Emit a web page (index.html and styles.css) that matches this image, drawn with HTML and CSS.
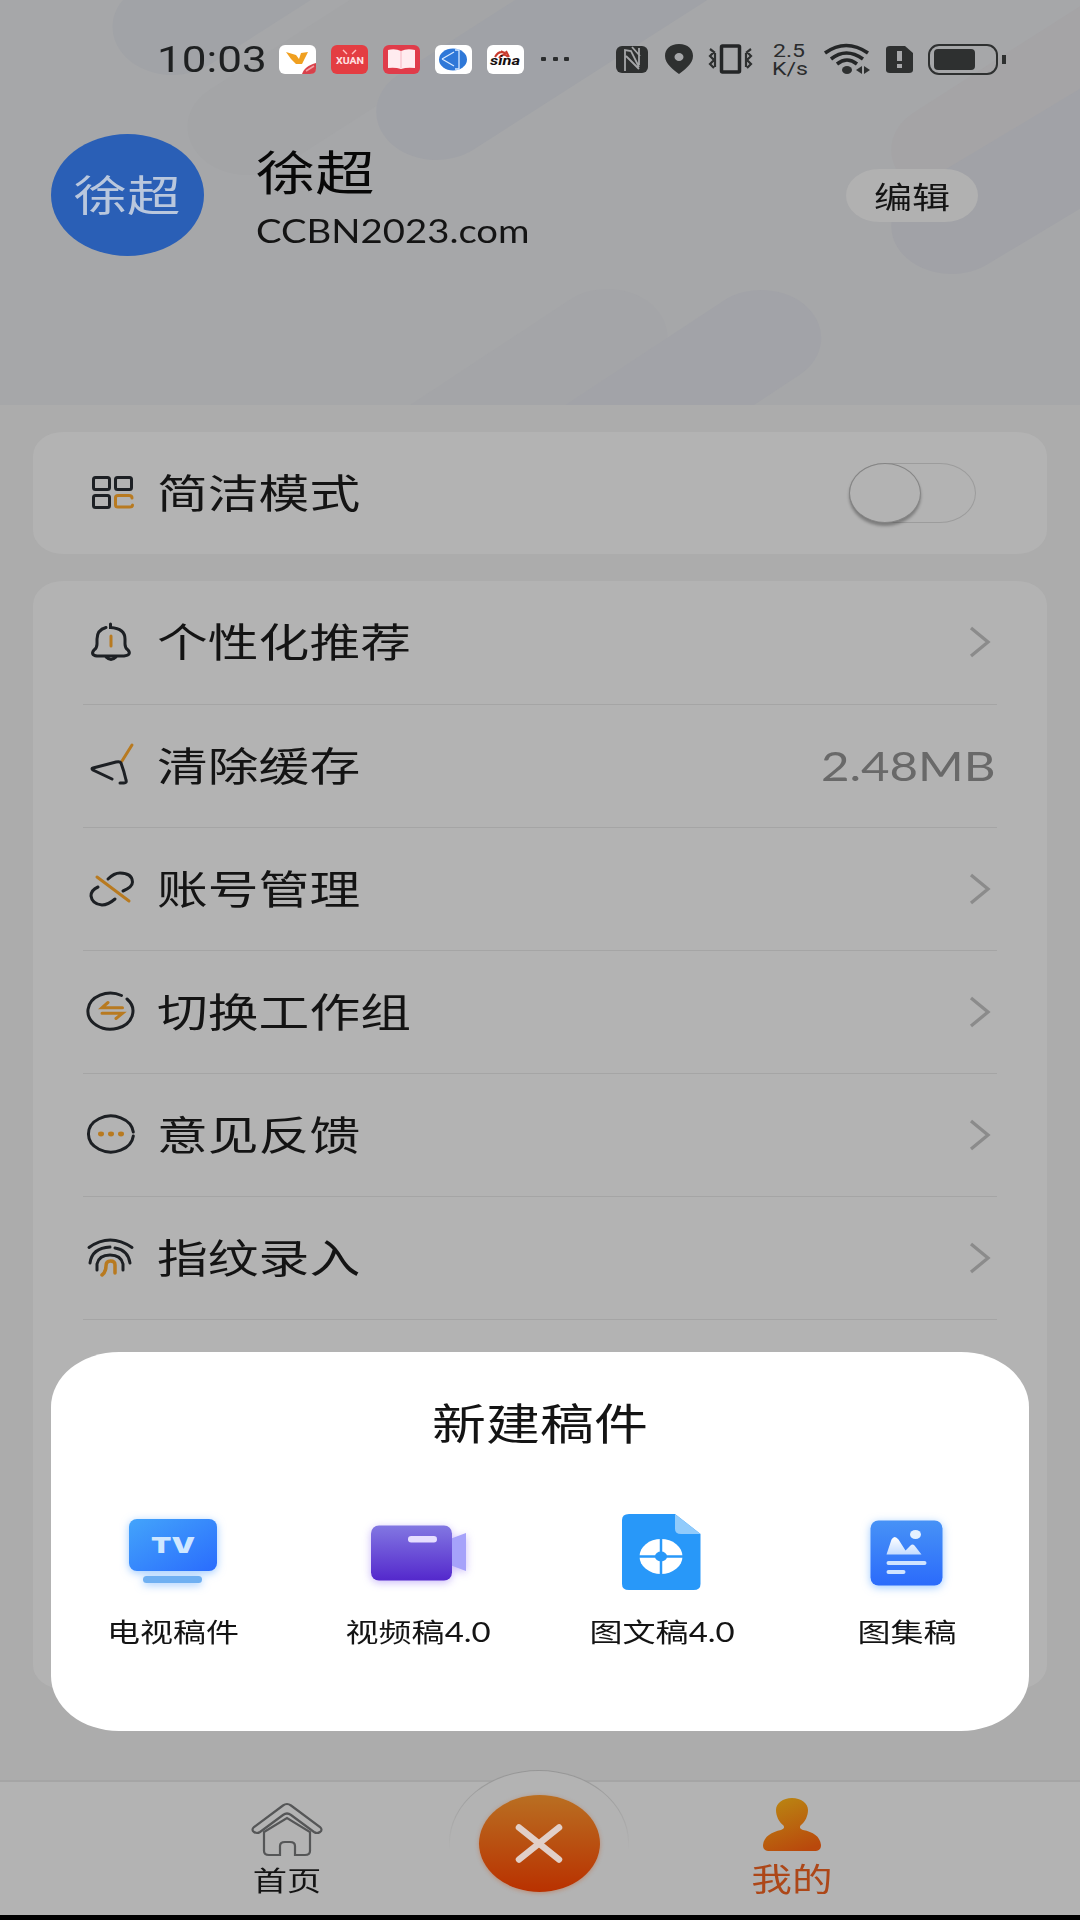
FILE: index.html
```html
<!DOCTYPE html>
<html lang="zh-CN">
<head>
<meta charset="utf-8">
<title>我的</title>
<link rel="stylesheet" href="styles.css">
</head>
<body>
<div class="screen">
  <header class="header">
    <svg class="streaks" viewBox="0 0 864 405" preserveAspectRatio="none">
      <g fill="none" stroke-width="96" stroke-linecap="round">
        <path stroke="#a1a3a7" d="M138 27L438 -213"/>
        <path stroke="#a4a5a7" d="M198 127L498 -113"/>
        <path stroke="#a0a2a7" d="M349 112L649 -128"/>
        <path stroke="#a5a4a6" d="M761 150L961 -10"/>
        <path stroke="#a1a2a7" d="M761 226L961 76"/>
        <path stroke="#a4a5a8" d="M486 337L286 502"/>
        <path stroke="#a2a3a8" d="M609 338L409 503"/>
      </g>
    </svg>
    <div class="status">
      <div class="clock"><span class="wide">10:03</span></div>
      <div class="apps">
        <svg width="37" height="29" viewBox="0 0 37 29"><rect width="37" height="29" rx="6" fill="#fff"/><path d="M7 7l10 3 3 4 2-6 7-1-3 6-3 6h-6l-5-5z" fill="#f0a020"/><path d="M23 29c2-6 7-9 14-11v6q0 5-6 5z" fill="#d8414b"/><path d="M27 26l8-5" stroke="#f3a0a4" stroke-width="1.5"/></svg>
        <svg width="37" height="29" viewBox="0 0 37 29"><rect width="37" height="29" rx="6" fill="#e43d42"/><path d="M12 5l4 4M25 5l-4 4" stroke="#ffc0c0" stroke-width="1.4"/><text x="5" y="19" class="app-word" textLength="28" lengthAdjust="spacingAndGlyphs">XUAN</text></svg>
        <svg width="37" height="29" viewBox="0 0 37 29"><rect width="37" height="29" rx="6" fill="#e03c4a"/><path d="M5 5q7-2 13 1 6-3 14-1v18q-8-1-14 1-6-2-13-1z" fill="#ffecef"/><path d="M18 6v17" stroke="#f5b6c2"/></svg>
        <svg width="37" height="29" viewBox="0 0 37 29"><rect width="37" height="29" rx="6" fill="#fff"/><ellipse cx="18" cy="14.500" rx="14" ry="11" fill="#2f78d8"/><path d="M7 14l12-7M7 14l12 7M20 5h4v19h-4" stroke="#d8eaff" stroke-width="1.300" fill="none"/></svg>
        <svg width="37" height="29" viewBox="0 0 37 29"><rect width="37" height="29" rx="6" fill="#fff"/><path d="M8 12q4-7 10-4M12 13q5-6 9-1M14 6l5 3M19 6l3 6" stroke="#c9392c" stroke-width="2" fill="none"/><text x="3" y="20" class="sina" textLength="30" lengthAdjust="spacingAndGlyphs">sina</text></svg>
      </div>
      <div class="dots"><i></i><i></i><i></i></div>
      <svg class="signals" width="240" height="36" viewBox="0 0 240 36" fill="#2e3030">
        <rect x="1" y="5" width="32" height="27" rx="6"/>
        <path d="M10 30V9l6 1 8 16M11 15l13 13M17 6l8 9M24 7v17" stroke="#a6a7a9" stroke-width="1.800" fill="none"/>
        <path fill-rule="evenodd" d="M64 3c9 0 14 5 14 12 0 8-9 14-14 18-5-4-14-10-14-18C50 8 55 3 64 3zm0 9a4.500 4 0 1 0 0 8 4.500 4 0 1 0 0-8z"/>
        <rect x="106.500" y="5" width="18" height="26" rx="1" fill="none" stroke="#242627" stroke-width="3.500"/>
        <path d="M95 8l4 3-4 4 4 4-4 4 4 4M136 8l-4 3 4 4-4 4 4 4-4 4M100 12v14M131 12v14" fill="none" stroke="#2e3030" stroke-width="2.200"/>
        <text x="158" y="15.500" class="rate" textLength="32" lengthAdjust="spacingAndGlyphs">2.5</text>
        <text x="157" y="33.500" class="rate" textLength="36" lengthAdjust="spacingAndGlyphs">K/s</text>
        <path d="M210 12q21-15 43 0M216 18q15-12 32 0M222 23q10-8 20 0" fill="none" stroke="#242627" stroke-width="3.600"/>
      </svg>
      <svg class="signals-end" width="185" height="36" viewBox="0 0 185 36" fill="#2e3030">
        <ellipse cx="12" cy="29" rx="5" ry="4"/><path d="M27 25v8l-6-4zM29 25v8l6-4z"/>
        <path fill-rule="evenodd" d="M55 5h15l8 7v17q0 3-4 3H55q-4 0-4-3V8q0-3 4-3zm7 5v10h5V10zm0 13v4h5v-4z"/>
        <rect x="94" y="4" width="68" height="29" rx="10" fill="none" stroke="#2e3030" stroke-width="2"/>
        <rect x="99" y="8" width="41" height="21" rx="4"/><rect x="167" y="14" width="4" height="9"/>
      </svg>
    </div>
    <div class="profile">
      <div class="avatar"><span class="wide">徐超</span></div>
      <div class="who">
        <div class="name"><span class="wide">徐超</span></div>
        <div class="org"><span class="wide">CCBN2023.com</span></div>
      </div>
      <div class="edit"><span class="wide">编辑</span></div>
    </div>
  </header>

  <main class="body">
    <section class="card simple">
      <div class="row">
        <svg class="ico" viewBox="0 0 52 40"><rect x="8.500" y="4.500" width="16" height="12" rx="2"/><rect x="30.500" y="4.500" width="16" height="12" rx="2"/><rect x="8.500" y="22.500" width="16" height="12" rx="2"/><path class="o" d="M47 25q0-2.500-3-2.500H33q-2.500 0-2.500 2v7.500q0 2 2.500 2h11.500q3 0 3-2"/></svg>
        <div class="label"><span class="wide">简洁模式</span></div>
        <div class="toggle"><div class="knob"></div></div>
      </div>
    </section>
    <section class="card list">
      <div class="row">
        <svg class="ico" viewBox="0 0 52 40"><path d="M21 5.500Q12 8 12 17v5q0 4-3 6-4 5 3 6h27q8-1 4-6-3-2-3-6v-5C40 9 34 6 25.500 5.500V2M21 35q5 5 10 0"/><path class="o" d="M26 14v10"/></svg>
        <div class="label"><span class="wide">个性化推荐</span></div>
        <svg class="chev" viewBox="0 0 22 32"><path d="M2 2l17 14L2 30"/></svg>
      </div>
      <div class="row">
        <svg class="ico" viewBox="0 0 52 40"><path class="o" d="M47-1L37 15"/><path d="M27 33L8 24q-2-1.500 0-2l23-6q4-1 5 1 3 8 5 17 1 3-2 3h-4"/></svg>
        <div class="label"><span class="wide">清除缓存</span></div>
        <div class="size"><span class="wide">2.48MB</span></div>
      </div>
      <div class="row">
        <svg class="ico" viewBox="0 0 52 40"><path d="M23 10q6-6 12-6 12 0 12.500 9 0 5-9.500 9M13 18q-7 3-7 9 1 8 11 9 6 0 13-6"/><path class="o" d="M12 8l32 24"/></svg>
        <div class="label"><span class="wide">账号管理</span></div>
        <svg class="chev" viewBox="0 0 22 32"><path d="M2 2l17 14L2 30"/></svg>
      </div>
      <div class="row">
        <svg class="ico" viewBox="0 0 52 40"><path d="M36.500 3.500A22.500 18 0 1 0 42 7"/><path class="o" d="M23 10.500l-6 5.200h20.500M17 21.300h20.500L31 26.500"/></svg>
        <div class="label"><span class="wide">切换工作组</span></div>
        <svg class="chev" viewBox="0 0 22 32"><path d="M2 2l17 14L2 30"/></svg>
      </div>
      <div class="row">
        <svg class="ico" viewBox="0 0 52 40"><path d="M48.300 17A22.500 18 0 1 0 48.300 21"/><g fill="#b87a20" stroke="none"><ellipse cx="16" cy="19" rx="3" ry="2.400"/><ellipse cx="26" cy="19" rx="3" ry="2.400"/><ellipse cx="36" cy="19" rx="3" ry="2.400"/></g></svg>
        <div class="label"><span class="wide">意见反馈</span></div>
        <svg class="chev" viewBox="0 0 22 32"><path d="M2 2l17 14L2 30"/></svg>
      </div>
      <div class="row">
        <svg class="ico" viewBox="0 0 52 40"><path d="M4 9.500q21-15 43 0M5 25Q7 10 25 9M30 10q13 2 15 15M12 32v-6q2-9 13-9t13 9v6"/><path class="o thick" d="M30 35v-8q0-4-4.500-4T21 28q0 6-4 9"/></svg>
        <div class="label"><span class="wide">指纹录入</span></div>
        <svg class="chev" viewBox="0 0 22 32"><path d="M2 2l17 14L2 30"/></svg>
      </div>
    </section>
  </main>

  <nav class="tabs">
    <div class="tab home">
      <svg width="74" height="56" viewBox="0 0 74 56" fill="none" stroke="#555657" stroke-width="2.200"><path d="M37 2q2 0 4 1.500L70 25q3 3 0 5-3 2-6 0L41 13q-4-3-8 0L10 30q-3 2-6 0-3-2 0-5L33 3.500Q35 2 37 2z"/><path d="M14 30L37 16l23 14v19q0 4-5 4H45V44q0-4-5-4h-5q-5 0-5 4v9H19q-5 0-5-4z"/></svg>
      <span class="wide">首页</span>
    </div>
    <div class="tab center">
      <div class="halo">
        <div class="close"><svg width="50" height="42" viewBox="0 0 50 42"><path d="M5 4.500l40 32M45 4.500L5 36.500" stroke="#e1cfc8" stroke-width="6.500" stroke-linecap="round"/></svg></div>
      </div>
    </div>
    <div class="tab mine">
      <svg width="58" height="56" viewBox="0 0 58 56"><defs><linearGradient id="person" x1=".3" y1="0" x2=".7" y2="1"><stop offset="0" stop-color="#ba8412"/><stop offset="1" stop-color="#b9480c"/></linearGradient></defs><path fill="url(#person)" d="M29 1c9 0 16 5 16 12 0 6-3 12-7 15-2 2-1 4 2 5 10 2 17 6 18 15 0 4-2 6-7 6H7c-5 0-7-2-7-6 1-9 9-13 18-15 3-1 4-3 2-5-4-3-7-9-7-15C13 6 20 1 29 1z"/></svg>
      <span class="wide">我的</span>
    </div>
  </nav>
  <div class="gesture"></div>

  <section class="sheet">
    <h2 class="title"><span class="wide">新建稿件</span></h2>
    <div class="kinds">
      <div class="kind">
        <svg viewBox="0 0 110 90"><defs><linearGradient id="tv" x1="0" y1="0" x2="1" y2="1"><stop offset="0" stop-color="#43a4fb"/><stop offset="1" stop-color="#2a6cfd"/></linearGradient></defs><g class="glow-blue"><rect x="11" y="13" width="88" height="52" rx="8" fill="url(#tv)"/><rect x="25" y="70" width="59" height="7" rx="3.500" fill="#6fb0f2"/></g><text x="33" y="47" class="tv" textLength="44" lengthAdjust="spacingAndGlyphs">TV</text></svg>
        <span class="wide">电视稿件</span>
      </div>
      <div class="kind">
        <svg viewBox="0 0 110 90"><defs><linearGradient id="cam" x1="0" y1="0" x2="0" y2="1"><stop offset="0" stop-color="#8277e2"/><stop offset="1" stop-color="#5428cc"/></linearGradient></defs><g class="glow-violet"><path d="M87 33l16-6v38l-16-6z" fill="#a6a2fa"/><rect x="8" y="19.500" width="81" height="55" rx="8" fill="url(#cam)"/></g><rect x="45" y="30" width="29" height="6.500" rx="3.200" fill="#e6deff"/></svg>
        <span class="wide">视频稿4.0</span>
      </div>
      <div class="kind">
        <svg viewBox="0 0 110 90"><path fill="#2898f9" d="M22 8h46L93.500 28v50q0 6-7 6H22q-7 0-7-6V14q0-6 7-6z"/><path fill="#91cbfb" d="M68 8L93.500 28H74q-6 0-6-5z"/><ellipse cx="54" cy="50.500" rx="21.500" ry="17.500" fill="#fff"/><path d="M54 32v37M32 50.500h44" stroke="#2898f9" stroke-width="2.500"/><ellipse cx="54" cy="50.500" rx="6" ry="5" fill="#2898f9"/></svg>
        <span class="wide">图文稿4.0</span>
      </div>
      <div class="kind">
        <svg viewBox="0 0 110 90"><defs><linearGradient id="pic" x1="0" y1="0" x2="0" y2="1"><stop offset="0" stop-color="#4792f6"/><stop offset="1" stop-color="#2b6bfb"/></linearGradient><linearGradient id="hill" x1="0" y1="0" x2="0" y2="1"><stop offset="0" stop-color="#fff"/><stop offset="1" stop-color="#c4dcff"/></linearGradient></defs><rect class="glow-blue" x="18.500" y="14.500" width="72" height="65" rx="8" fill="url(#pic)"/><path fill="url(#hill)" d="M34.500 48.500l5-15q3-5 7 0l7 11 5-5q2-2 4 0l7 9z"/><ellipse cx="63.500" cy="28.500" rx="5.500" ry="4.500" fill="#e5f1ff"/><path d="M36.500 57h36M36.500 66h15" stroke="#cfe4ff" stroke-width="4" stroke-linecap="round"/></svg>
        <span class="wide">图集稿</span>
      </div>
    </div>
  </section>
</div>
</body>
</html>
```
FILE: styles.css
```css
* { box-sizing: border-box; }
body { margin: 0; }
.screen {
  position: relative;
  display: flex;
  flex-direction: column;
  width: 1080px;
  height: 1920px;
  overflow: hidden;
  background: #acacac;
  color: #141414;
  font-family: Lato, "Noto Sans CJK SC", sans-serif;
}
.wide {
  display: inline-block;
  white-space: nowrap;
  transform: scaleX(1.27);
  transform-origin: left center;
}

/* header */
.header { position: relative; height: 405px; background: #a6a7a9; flex: none; }
.streaks { position: absolute; inset: 0; width: 1080px; height: 405px; overflow: hidden; }
.status { position: relative; display: flex; align-items: center; height: 118px; padding-left: 157px; }
.clock { width: 122px; font: 37px/37px Roboto, sans-serif; color: #1e2021; }
.clock .wide { transform: scaleX(1.19); }
.apps { display: flex; gap: 15px; }
.app-word { font: bold 9px Roboto, sans-serif; fill: #ffe2e2; }
.sina { font: italic bold 12px Roboto, sans-serif; fill: #161010; }
.dots { display: flex; gap: 6.500px; margin-left: 17px; }
.dots i { width: 5px; height: 4px; background: #2a2c2d; border-radius: 1px; }
.signals { margin-left: 46px; overflow: visible; }
.signals-end { margin-left: -20px; }
.rate { font: 19px Roboto, sans-serif; fill: #2a2c2d; }
.profile { position: relative; display: flex; align-items: flex-start; height: 138px; padding: 16px 102px 0 51px; }
.avatar {
  display: flex;
  align-items: center;
  justify-content: center;
  width: 153px;
  height: 122px;
  border-radius: 50%;
  background: #2a5fb6;
  color: #b9c7dd;
  font-size: 42px;
  line-height: 42px;
}
.avatar .wide { transform-origin: center; }
.who { flex: 1; padding: 12px 0 0 52px; color: #080808; }
.name { font-size: 47px; line-height: 52px; }
.name .wide { transform: scaleX(1.26); }
.org { margin-top: 9px; font-size: 33px; line-height: 46px; color: #141414; }
.org .wide { transform: scaleX(1.16); }
.edit {
  display: flex;
  align-items: center;
  justify-content: center;
  width: 132px;
  height: 53px;
  margin-top: 35px;
  border-radius: 33px / 26.5px;
  background: #b1b1b1;
  font-size: 30px;
  line-height: 30px;
}
.edit .wide { transform-origin: center; }

/* settings */
.body { display: flex; flex-direction: column; gap: 27px; height: 1375px; flex: none; padding: 27px 33px 91px; }
.card { background: #b3b3b3; border-radius: 30px / 24px; padding: 0 50px; }
.simple { height: 122px; flex: none; }
.list { flex: 1; }
.row { display: flex; align-items: center; height: 123px; border-bottom: 1px solid #a5a5a5; padding: 0 3px 0 2px; }
.list .row:first-child { height: 124px; padding-bottom: 2px; }
.simple .row { height: 122px; border: 0; padding-right: 21px; }
.ico { width: 52px; height: 40px; overflow: visible; fill: none; stroke: #1d2024; stroke-width: 3; stroke-linecap: round; flex: none; }
.ico .o { stroke: #b87a20; }
.ico .thick { stroke-width: 3.500; }
.label { flex: 1; padding-left: 20px; font-size: 40px; line-height: 48px; }
.chev { width: 22px; height: 32px; margin-right: 3.500px; fill: none; stroke: #8b8b8b; stroke-width: 3.300; }
.size { color: #696969; font-size: 41px; line-height: 48px; margin-right: -2px; }
.size .wide { transform: scaleX(1.2); transform-origin: right center; }
.toggle { width: 127px; height: 60px; border: 1.500px solid #9c9c9c; border-radius: 36px / 30px; }
.knob { width: 72px; height: 60px; margin: -1px; border: 1.500px solid #858585; border-radius: 50%; box-shadow: 0 3px 3px rgba(0,0,0,.3); background: #b3b3b3; }

/* bottom navigation */
.tabs { display: flex; height: 135px; flex: none; padding: 0 82px; background: #b3b3b3; border-top: 2px solid #a5a5a5; }
.tab { display: flex; flex-direction: column; align-items: center; }
.tab .wide { transform-origin: center; }
.home { width: 410px; padding-top: 20px; font-size: 27px; line-height: 34px; }
.home svg { margin-bottom: 6px; }
.center { width: 96px; margin-left: -1px; }
.mine { width: 410px; padding-top: 15px; color: #ad4718; font-size: 32px; line-height: 40px; }
.mine svg { margin-bottom: 6px; }
.halo {
  display: flex;
  justify-content: center;
  flex: none;
  width: 180px;
  height: 146px;
  margin-top: -12px;
  padding-top: 24px;
  border-radius: 50%;
  background: linear-gradient(#b3b3b3, #b3b3b3) padding-box, linear-gradient(#969696, #b3b3b3 55%) border-box;
  border: 1.500px solid transparent;
}
.close {
  display: flex;
  align-items: center;
  justify-content: center;
  width: 121px;
  height: 97px;
  border-radius: 50%;
  background: linear-gradient(#b96f22, #b93100);
  box-shadow: 0 1px 4px rgba(200, 80, 20, .4);
}
.gesture { height: 5px; background: #000; flex: none; }

/* creation sheet lies over the page */
.sheet {
  position: absolute;
  left: 51px;
  top: 1352px;
  width: 978px;
  height: 379px;
  border-radius: 68px / 55px;
  background: #fff;
  padding-top: 45px;
}
.title { margin: 0; text-align: center; font-size: 43px; line-height: 54px; font-weight: 400; }
.title .wide { transform: scaleX(1.255); transform-origin: center; }
.kinds { display: grid; grid-template-columns: repeat(4, 1fr); margin-top: 55px; }
.kind { display: flex; flex-direction: column; align-items: center; font-size: 26px; line-height: 36px; }
.kind svg { width: 110px; height: 90px; margin-bottom: 18px; overflow: visible; }
.kind .wide { transform-origin: center; }
.tv { font: 900 22px Inter, sans-serif; fill: #cfe7ff; }
.glow-blue { filter: drop-shadow(0 2px 4px rgba(60, 150, 255, .5)); }
.glow-violet { filter: drop-shadow(0 2px 4px rgba(120, 80, 240, .4)); }
```
